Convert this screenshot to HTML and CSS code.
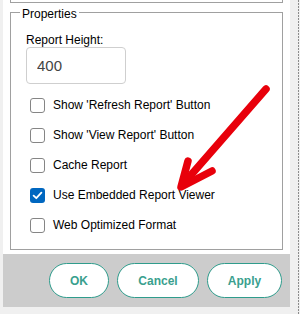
FILE: index.html
```html
<!DOCTYPE html>
<html>
<head>
<meta charset="utf-8">
<title>Report Properties</title>
<link rel="stylesheet" href="styles.css">
</head>
<body>
<div class="window">
  <div class="panel">
    <div class="prev-group"></div>

    <fieldset class="group">
      <legend>Properties</legend>
      <div class="group-body">
        <label class="field-label" for="report-height">Report Height:</label>
        <input class="text-input" id="report-height" type="text" value="400">

        <ul class="options">
          <li class="option"><span class="check"></span>Show 'Refresh Report' Button</li>
          <li class="option"><span class="check"></span>Show 'View Report' Button</li>
          <li class="option"><span class="check"></span>Cache Report</li>
          <li class="option"><span class="check on"><svg width="15" height="15" viewBox="0 0 15 15"><path d="M3.6 7.6 L6.3 10.2 L11.4 4.6" fill="none" stroke="#fff" stroke-width="1.8" stroke-linecap="round" stroke-linejoin="round"/></svg></span>Use Embedded Report Viewer</li>
          <li class="option"><span class="check"></span>Web Optimized Format</li>
        </ul>
      </div>
    </fieldset>

    <div class="button-bar">
      <button class="btn btn-ok" type="button">OK</button>
      <button class="btn btn-cancel" type="button">Cancel</button>
      <button class="btn btn-apply" type="button">Apply</button>
    </div>
  </div>
  <div class="gutter"></div>
</div>

<!-- annotation arrow drawn over the dialog -->
<svg class="arrow" width="300" height="314" viewBox="0 0 300 314">
  <g fill="none" stroke="#e8000b" stroke-width="7.5" stroke-linecap="round" stroke-linejoin="round">
    <path d="M266 89 L184 183"/>
    <path d="M188 161 L181 187 L212 171"/>
  </g>
</svg>
</body>
</html>
```

FILE: styles.css
```css
/* Report properties dialog */

body
{ margin: 0;
  width: 300px;
  height: 314px;
  position: relative;
  overflow: hidden;
  background: #f0f0f0;
  font-family: "Liberation Sans", Arial, sans-serif;
  font-size: 12px;
  color: #000;
}

div.window
{ display: flex;
  height: 314px;
}

div.panel
{ width: 287px;
  height: 307px;
  margin-left: 3px;
  background: #fff;
  display: flex;
  flex-direction: column;
}

div.prev-group
{ height: 2px;
  margin: 0 7px;
  border: 1px solid #a0a0a0;
  border-top: none;
}

div.gutter
{ flex: 1;
  background: repeating-linear-gradient(to bottom, #8c8c8c 0 2px, transparent 2px 3px) no-repeat;
  background-size: 1px 100%;
  background-position: 8px 0;
}

/* Group box */

fieldset.group
{ margin: 0 7px;
  padding: 0 0 9px 0;
  border: 1px solid #a0a0a0;
  min-width: 0;
}

fieldset.group legend
{ margin-left: 9px;
  padding: 4px 2px 0;
  line-height: 14px;
}

div.group-body
{ padding-left: 15px;
}

label.field-label
{ display: block;
  margin-top: 12px;
  line-height: 14px;
}

input.text-input
{ display: block;
  box-sizing: border-box;
  width: 100px;
  height: 37px;
  margin: 0;
  padding: 0 10px;
  border: 1px solid #cfcfcf;
  border-radius: 4px;
  font-family: "Liberation Sans", Arial, sans-serif;
  font-size: 15px;
  color: #444;
}

/* Check boxes */

ul.options
{ list-style: none;
  margin: 6px 0 0 4px;
  padding: 0;
}

li.option
{ height: 30px;
  display: flex;
  align-items: center;
  gap: 8px;
}

span.check
{ box-sizing: border-box;
  width: 15px;
  height: 15px;
  border: 1px solid #858585;
  border-radius: 3px;
  background: #fff;
  flex: none;
}

span.check.on
{ border: none;
  background: #0067c0;
}

span.check svg
{ display: block;
}

/* Buttons */

div.button-bar
{ flex: 1;
  margin-top: 4px;
  padding-right: 8px;
  background: #cccccc;
  display: flex;
  justify-content: flex-end;
  align-items: center;
  gap: 8px;
}

button.btn
{ box-sizing: border-box;
  height: 35px;
  padding: 0;
  border: 1px solid #2f9c8c;
  border-radius: 18px;
  background: #fff;
  color: #3a9f8e;
  font-family: "Liberation Sans", Arial, sans-serif;
  font-size: 12px;
  font-weight: bold;
}

button.btn-ok { width: 60px; }
button.btn-cancel { width: 82px; }
button.btn-apply { width: 75px; }

svg.arrow
{ position: absolute;
  top: 0;
  left: 0;
  pointer-events: none;
}
```
